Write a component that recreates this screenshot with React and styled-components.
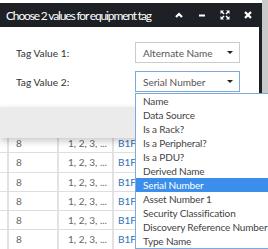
import React from 'react';
import styled, { createGlobalStyle } from 'styled-components';

const GlobalStyle = createGlobalStyle`
  html, body {
    margin: 0;
    padding: 0;
  }
  body {
    font-family: Lato, 'Open Sans', 'Liberation Sans', sans-serif;
    background: #fff;
    overflow: hidden;
  }
`;

const Screen = styled.div`
  display: flex;
  width: 268px;
  height: 249px;
  overflow: hidden;
`;

const Page = styled.div`
  position: relative;
  flex: 1;
  padding-top: 134px;
`;

const Scrollbar = styled.div`
  width: 6px;
  background: #c9c9c9;
`;

const Row = styled.div`
  display: grid;
  grid-template-columns: 7px 50px 55px 1fr;
  height: 19.25px;
  box-sizing: border-box;
  border-bottom: 1px solid #dedede;
  font-size: 10px;
`;

const Cell = styled.div`
  display: flex;
  align-items: center;
  padding-left: ${({ $pad }) => $pad || 0}px;
  border-left: ${({ $first }) => ($first ? 'none' : '2px solid #e2e2e2')};
  color: ${({ $link }) => ($link ? '#2f72b5' : '#666')};
  white-space: nowrap;
  overflow: hidden;
`;

const Dialog = styled.div`
  position: absolute;
  top: 3px;
  left: 0;
  width: 262px;
  box-sizing: border-box;
  border-right: 3px solid #1d2025;
  z-index: 2;
`;

const Header = styled.div`
  display: flex;
  align-items: center;
  height: 24px;
  padding-left: 6px;
  background: #1d2025;
  color: #fff;
`;

const Title = styled.div`
  font-size: 12px;
  letter-spacing: -1.15px;
  white-space: nowrap;
`;

const Tools = styled.div`
  display: flex;
  margin-left: auto;
`;

const Tool = styled.div`
  display: flex;
  align-items: center;
  justify-content: center;
  width: 23px;
  height: 24px;
`;

const Body = styled.div`
  display: grid;
  grid-template-columns: 119px 105px;
  row-gap: 8px;
  align-items: center;
  padding: 15px 0 15px 16px;
  background: #fff;
`;

const Label = styled.div`
  font-size: 10.2px;
  color: #333;
`;

const Field = styled.div`
  position: relative;
`;

const Select = styled.div`
  display: flex;
  align-items: center;
  justify-content: space-between;
  height: 21px;
  box-sizing: border-box;
  padding: 0 6px 0 7px;
  border: 1px solid ${({ $open }) => ($open ? '#7ea9dc' : '#cccccc')};
  font-size: 10px;
  color: #555;
  background: #fff;
`;

const Caret = styled.span`
  width: 0;
  height: 0;
  border-left: 3px solid transparent;
  border-right: 3px solid transparent;
  border-top: 3px solid #222;
`;

const Menu = styled.div`
  position: absolute;
  top: calc(100% + 1px);
  left: 0;
  width: 133px;
  box-sizing: border-box;
  border: 1px solid #7ea9dc;
  border-right: none;
  background: #fff;
  z-index: 5;
`;

const Option = styled.div`
  height: 14px;
  line-height: 14px;
  padding-left: 7px;
  font-size: 10px;
  letter-spacing: -0.15px;
  white-space: nowrap;
  color: ${({ $active }) => ($active ? '#fff' : '#444')};
  background: ${({ $active }) => ($active ? '#3b8ee9' : 'transparent')};
`;

const Footer = styled.div`
  height: 31px;
  background: #ebebeb;
  box-shadow: 0 3px 7px rgba(0, 0, 0, 0.22);
`;

const options = [
  'Name',
  'Data Source',
  'Is a Rack?',
  'Is a Peripheral?',
  'Is a PDU?',
  'Derived Name',
  'Serial Number',
  'Asset Number 1',
  'Security Classification',
  'Discovery Reference Number',
  'Type Name',
];

const rows = Array.from({ length: 6 }, (_, i) => i);

const Icon = ({ children }) => (
  <svg width="10" height="10" viewBox="0 0 10 10" fill="none" stroke="#fff">
    {children}
  </svg>
);

const App = () => (
  <>
    <GlobalStyle />
    <Screen>
      <Page>
        {rows.map((r) => (
          <Row key={r}>
            <Cell $first />
            <Cell $pad={7}>8</Cell>
            <Cell $pad={9}>1, 2, 3, ...</Cell>
            <Cell $pad={4} $link>
              B1F.1
            </Cell>
          </Row>
        ))}
        <Dialog>
          <Header>
            <Title>Choose 2 values for equipment tag</Title>
            <Tools>
              <Tool>
                <Icon>
                  <polyline points="2,7 5,4 8,7" strokeWidth="2.2" />
                </Icon>
              </Tool>
              <Tool>
                <Icon>
                  <line x1="2" y1="5.5" x2="8" y2="5.5" strokeWidth="2" />
                </Icon>
              </Tool>
              <Tool>
                <Icon>
                  <g fill="#fff" stroke="none">
                    <polygon points="0.5,0.5 4,0.5 0.5,4" />
                    <polygon points="9.5,0.5 6,0.5 9.5,4" />
                    <polygon points="0.5,9.5 4,9.5 0.5,6" />
                    <polygon points="9.5,9.5 6,9.5 9.5,6" />
                  </g>
                  <line x1="2" y1="2" x2="4" y2="4" strokeWidth="1.4" />
                  <line x1="8" y1="2" x2="6" y2="4" strokeWidth="1.4" />
                  <line x1="2" y1="8" x2="4" y2="6" strokeWidth="1.4" />
                  <line x1="8" y1="8" x2="6" y2="6" strokeWidth="1.4" />
                </Icon>
              </Tool>
              <Tool>
                <Icon>
                  <line x1="2" y1="2" x2="8" y2="8" strokeWidth="2.3" />
                  <line x1="8" y1="2" x2="2" y2="8" strokeWidth="2.3" />
                </Icon>
              </Tool>
            </Tools>
          </Header>
          <Body>
            <Label>Tag Value 1:</Label>
            <Field>
              <Select>
                Alternate Name
                <Caret />
              </Select>
            </Field>
            <Label>Tag Value 2:</Label>
            <Field>
              <Select $open>
                Serial Number
                <Caret />
              </Select>
              <Menu>
                {options.map((o) => (
                  <Option key={o} $active={o === 'Serial Number'}>
                    {o}
                  </Option>
                ))}
              </Menu>
            </Field>
          </Body>
          <Footer />
        </Dialog>
      </Page>
      <Scrollbar />
    </Screen>
  </>
);

export default App;
